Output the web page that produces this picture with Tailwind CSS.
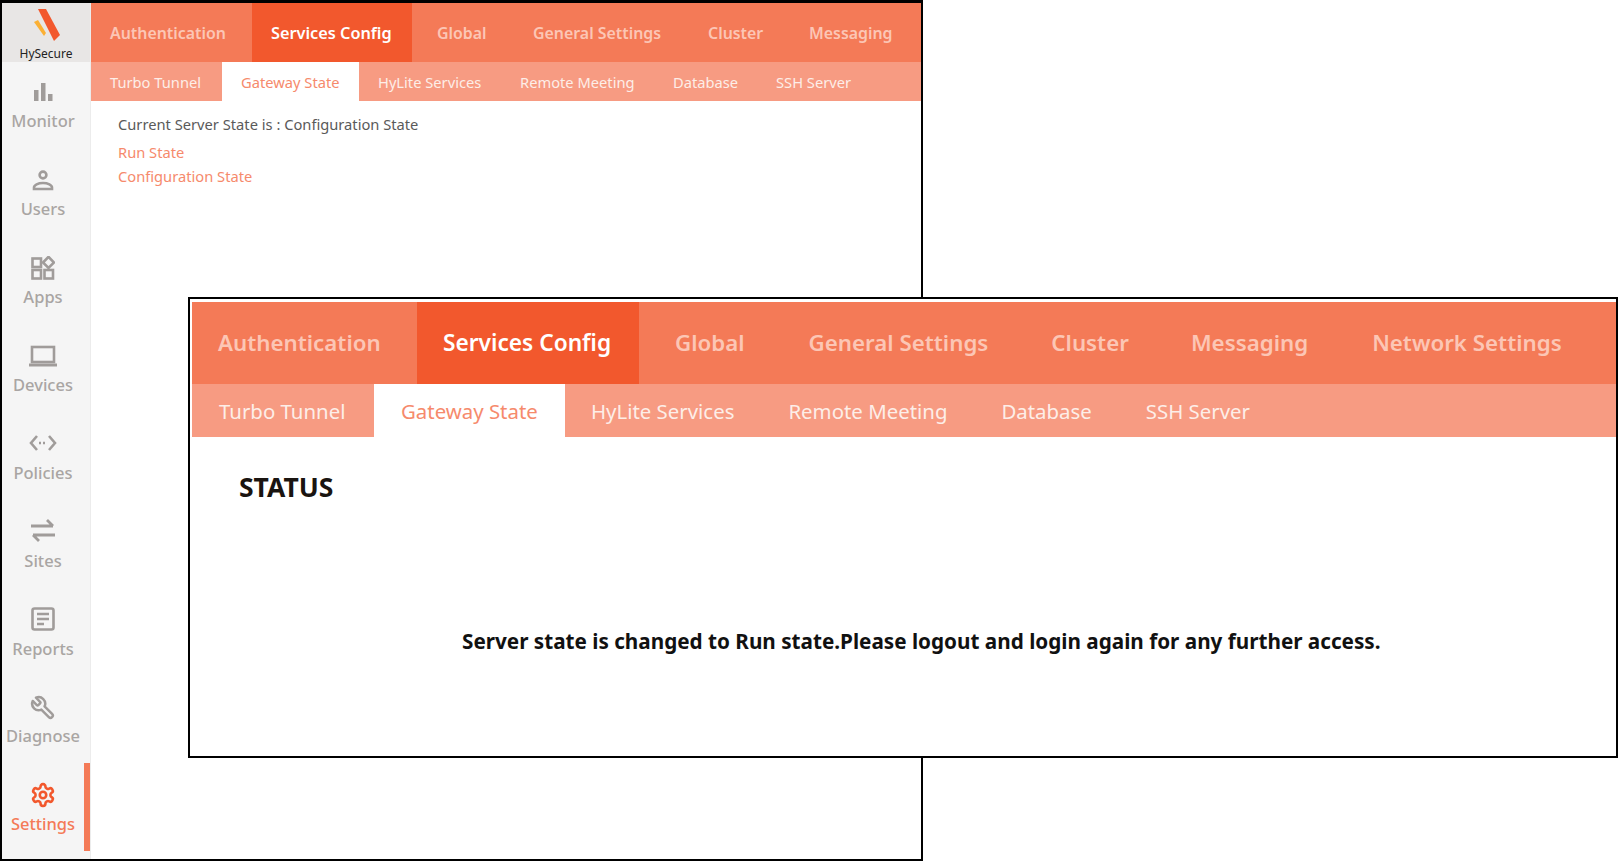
<!DOCTYPE html>
<html>
<head>
  <meta charset="UTF-8">
  <title>HySecure Gateway State</title>
  <script src="https://cdn.jsdelivr.net/npm/@tailwindcss/browser@4"></script>
</head>
<body class="bg-white font-['Noto_Sans','Open_Sans',sans-serif]">
  <div class="relative w-[1618px] h-[861px] overflow-hidden bg-white">

    <!-- back window -->
    <div class="absolute left-0 top-0 w-[923px] h-[861px] border-2 border-t-[3px] border-black flex bg-white">
      <!-- sidebar -->
      <div class="w-[89px] h-full bg-[#f5f5f5] border-r border-[#ececec] flex flex-col shrink-0">
        <div class="h-[59px] bg-[#e8e6e5] flex flex-col items-center">
          <svg class="w-[30px] h-[33px] mt-[6px] ml-[1px]" viewBox="0 0 30 33"><polygon points="6,0 14,0 28,26 22,32" fill="#f2582d"/><polygon points="2,13 6,11 14,24 12,27" fill="#fbb034"/></svg>
          <span class="text-[12px] leading-[14px] mt-[5px] text-[#222]">HySecure</span>
        </div>
        <div class="flex-1 flex flex-col pt-[1px] text-[16.5px] font-medium text-[#a9a5a3]">
          <div class="h-[88px] flex flex-col items-center pr-[6px] pt-[17px]">
            <svg class="w-[24px] h-[24px]" viewBox="0 0 24 24" fill="#a09c9a"><rect x="3" y="10" width="4.500" height="11"/><rect x="10" y="3" width="4.500" height="18"/><rect x="17" y="14" width="4.500" height="7"/></svg>
            <span class="leading-[22px] mt-[6px]">Monitor</span>
          </div>
          <div class="h-[88px] flex flex-col items-center pr-[6px] pt-[17px]">
            <svg class="w-[24px] h-[24px]" viewBox="0 0 24 24" fill="none" stroke="#a09c9a" stroke-width="2.600"><circle cx="12" cy="7" r="3.400"/><path d="M3 21v-1.500c0-2.500 4-4.500 9-4.500s9 2 9 4.500V21z"/></svg>
            <span class="leading-[22px] mt-[6px]">Users</span>
          </div>
          <div class="h-[88px] flex flex-col items-center pr-[6px] pt-[17px]">
            <svg class="w-[24px] h-[24px]" viewBox="0 0 24 24" fill="none" stroke="#a09c9a" stroke-width="2.600"><rect x="1.500" y="2.500" width="8.500" height="8.500"/><rect x="1.500" y="14" width="8.500" height="8.500"/><rect x="13.500" y="14" width="8.500" height="8.500"/><polygon points="17.500,0.800 23,6.500 17.500,12 12,6.500"/></svg>
            <span class="leading-[22px] mt-[6px]">Apps</span>
          </div>
          <div class="h-[88px] flex flex-col items-center pr-[6px] pt-[17px]">
            <svg class="w-[30px] h-[24px]" viewBox="0 0 30 24" fill="none" stroke="#a09c9a" stroke-width="2.600"><rect x="4" y="3" width="22" height="15"/><path d="M1 21h28" stroke-width="3"/></svg>
            <span class="leading-[22px] mt-[6px]">Devices</span>
          </div>
          <div class="h-[88px] flex flex-col items-center pr-[6px] pt-[16px]">
            <svg class="w-[28px] h-[24px]" viewBox="0 0 28 24" fill="none" stroke="#a09c9a" stroke-width="2.600"><path d="M8 5l-6 7 6 7M20 5l6 7-6 7"/><path d="M10 12h8" stroke-dasharray="2 2"/></svg>
            <span class="leading-[22px] mt-[7px]">Policies</span>
          </div>
          <div class="h-[88px] flex flex-col items-center pr-[6px] pt-[15px]">
            <svg class="w-[26px] h-[24px]" viewBox="0 0 26 24" fill="none" stroke="#a09c9a" stroke-width="2.800"><path d="M1 8h22M17 2l6 6"/><path d="M25 17H3M9 23l-6-6"/></svg>
            <span class="leading-[22px] mt-[8px]">Sites</span>
          </div>
          <div class="h-[88px] flex flex-col items-center pr-[6px] pt-[16px]">
            <svg class="w-[24px] h-[24px]" viewBox="0 0 24 24" fill="none" stroke="#a09c9a" stroke-width="2.600"><rect x="1.500" y="1.500" width="21" height="21" rx="2"/><path d="M6 7h12M6 12h12M6 17h7"/></svg>
            <span class="leading-[22px] mt-[7px]">Reports</span>
          </div>
          <div class="h-[88px] flex flex-col items-center pr-[6px] pt-[16px]">
            <svg class="w-[28px] h-[26px] -scale-x-100" viewBox="0 0 24 24" fill="none" stroke="#a09c9a" stroke-width="2.300" stroke-linejoin="round"><path d="M14.700 6.300a1 1 0 0 0 0 1.400l1.600 1.600a1 1 0 0 0 1.400 0l3.770-3.770a6 6 0 0 1-7.940 7.940l-6.910 6.910a2.120 2.120 0 0 1-3-3l6.910-6.910a6 6 0 0 1 7.940-7.940l-3.760 3.760z"/></svg>
            <span class="leading-[22px] mt-[4px]">Diagnose</span>
          </div>
          <div class="relative h-[88px] flex flex-col items-center pr-[6px] pt-[15px] text-[#f47a57]">
            <svg class="w-[26px] h-[26px]" viewBox="0 0 24 24" fill="none" stroke="#f2582d" stroke-width="2.400"><path d="M12.220 2h-.44a2 2 0 0 0-2 2v.18a2 2 0 0 1-1 1.730l-.43.25a2 2 0 0 1-2 0l-.15-.08a2 2 0 0 0-2.730.73l-.22.38a2 2 0 0 0 .73 2.730l.15.1a2 2 0 0 1 1 1.720v.51a2 2 0 0 1-1 1.740l-.15.09a2 2 0 0 0-.73 2.730l.22.38a2 2 0 0 0 2.730.73l.15-.08a2 2 0 0 1 2 0l.43.25a2 2 0 0 1 1 1.730V20a2 2 0 0 0 2 2h.44a2 2 0 0 0 2-2v-.18a2 2 0 0 1 1-1.730l.43-.25a2 2 0 0 1 2 0l.15.08a2 2 0 0 0 2.730-.73l.22-.39a2 2 0 0 0-.73-2.730l-.15-.08a2 2 0 0 1-1-1.740v-.5a2 2 0 0 1 1-1.740l.15-.09a2 2 0 0 0 .73-2.730l-.22-.38a2 2 0 0 0-2.730-.73l-.15.08a2 2 0 0 1-2 0l-.43-.25a2 2 0 0 1-1-1.730V4a2 2 0 0 0-2-2z"/><circle cx="12" cy="12" r="3"/></svg>
            <span class="leading-[22px] mt-[5px]">Settings</span>
            <div class="absolute right-0 -top-[4px] bottom-[4px] w-[6px] bg-[#f47a57]"></div>
          </div>
        </div>
      </div>
      <!-- main -->
      <div class="flex-1 min-w-0 flex flex-col">
        <div class="h-[59px] bg-[#f47a57] flex text-[15.9px] font-semibold text-[#fcc6b5]">
          <div class="w-[161px] pl-[19px] pt-[2px] flex items-center">Authentication</div>
          <div class="w-[160px] pl-[19px] pt-[1px] flex items-center bg-[#f2582d] text-white text-[16.3px]">Services Config</div>
          <div class="w-[121px] pl-[25px] pt-[2px] flex items-center">Global</div>
          <div class="w-[175px] pt-[2px] flex items-center">General Settings</div>
          <div class="w-[101px] pt-[2px] flex items-center">Cluster</div>
          <div class="pt-[2px] flex items-center">Messaging</div>
        </div>
        <div class="h-[39px] bg-[#f79b82] flex text-[14.7px] text-[#fdeee8]">
          <div class="w-[131px] pl-[19px] pt-[2px] flex items-center">Turbo Tunnel</div>
          <div class="w-[137px] pl-[19px] pt-[2px] flex items-center bg-white text-[#f68a6c]">Gateway State</div>
          <div class="w-[161px] pl-[19px] pt-[2px] flex items-center">HyLite Services</div>
          <div class="w-[153px] pt-[2px] flex items-center">Remote Meeting</div>
          <div class="w-[103px] pt-[2px] flex items-center">Database</div>
          <div class="pt-[2px] flex items-center">SSH Server</div>
        </div>
        <div class="pl-[27px] pt-[13px] text-[14.7px]">
          <p class="text-[#5a5a5a] leading-[20px]">Current Server State is : Configuration State</p>
          <p class="text-[#f68a6c] leading-[24px] mt-[6px]">Run State</p>
          <p class="text-[#f68a6c] leading-[24px]">Configuration State</p>
        </div>
      </div>
    </div>

    <!-- front window -->
    <div class="absolute left-[188px] top-[297px] w-[1430px] h-[461px] border-2 border-black bg-white pl-[2px] pt-[3px] flex flex-col">
      <div class="h-[82px] bg-[#f47a57] flex text-[22.3px] font-semibold text-[#fcc6b5] shrink-0">
        <div class="w-[225px] pl-[26px] flex items-center">Authentication</div>
        <div class="w-[222px] pl-[26px] pt-[1px] flex items-center bg-[#f2582d] text-white text-[22.7px]">Services Config</div>
        <div class="pl-[36px] pr-[32px] flex items-center">Global</div>
        <div class="px-[32px] flex items-center">General Settings</div>
        <div class="pl-[31px] pr-[30px] flex items-center">Cluster</div>
        <div class="px-[32px] flex items-center">Messaging</div>
        <div class="px-[32px] flex items-center">Network Settings</div>
      </div>
      <div class="h-[53px] bg-[#f79b82] flex text-[20.4px] text-[#fdeee8] shrink-0">
        <div class="w-[182px] pl-[27px] pt-[2px] flex items-center">Turbo Tunnel</div>
        <div class="w-[191px] pl-[27px] pt-[2px] flex items-center bg-white text-[#f68a6c]">Gateway State</div>
        <div class="pl-[26px] pr-[27px] pt-[2px] flex items-center">HyLite Services</div>
        <div class="px-[27px] pt-[2px] flex items-center">Remote Meeting</div>
        <div class="px-[27px] pt-[2px] flex items-center">Database</div>
        <div class="px-[27px] pt-[2px] flex items-center">SSH Server</div>
      </div>
      <div class="flex-1 flex flex-col">
        <h2 class="pl-[47px] pt-[33px] text-[26.5px] leading-[34px] font-bold text-[#1a1410]">STATUS</h2>
        <p class="mt-[122px] pl-[270px] text-[20.7px] leading-[30px] font-bold text-[#111]">Server state is changed to Run state.Please logout and login again for any further access.</p>
      </div>
    </div>

  </div>
</body>
</html>
